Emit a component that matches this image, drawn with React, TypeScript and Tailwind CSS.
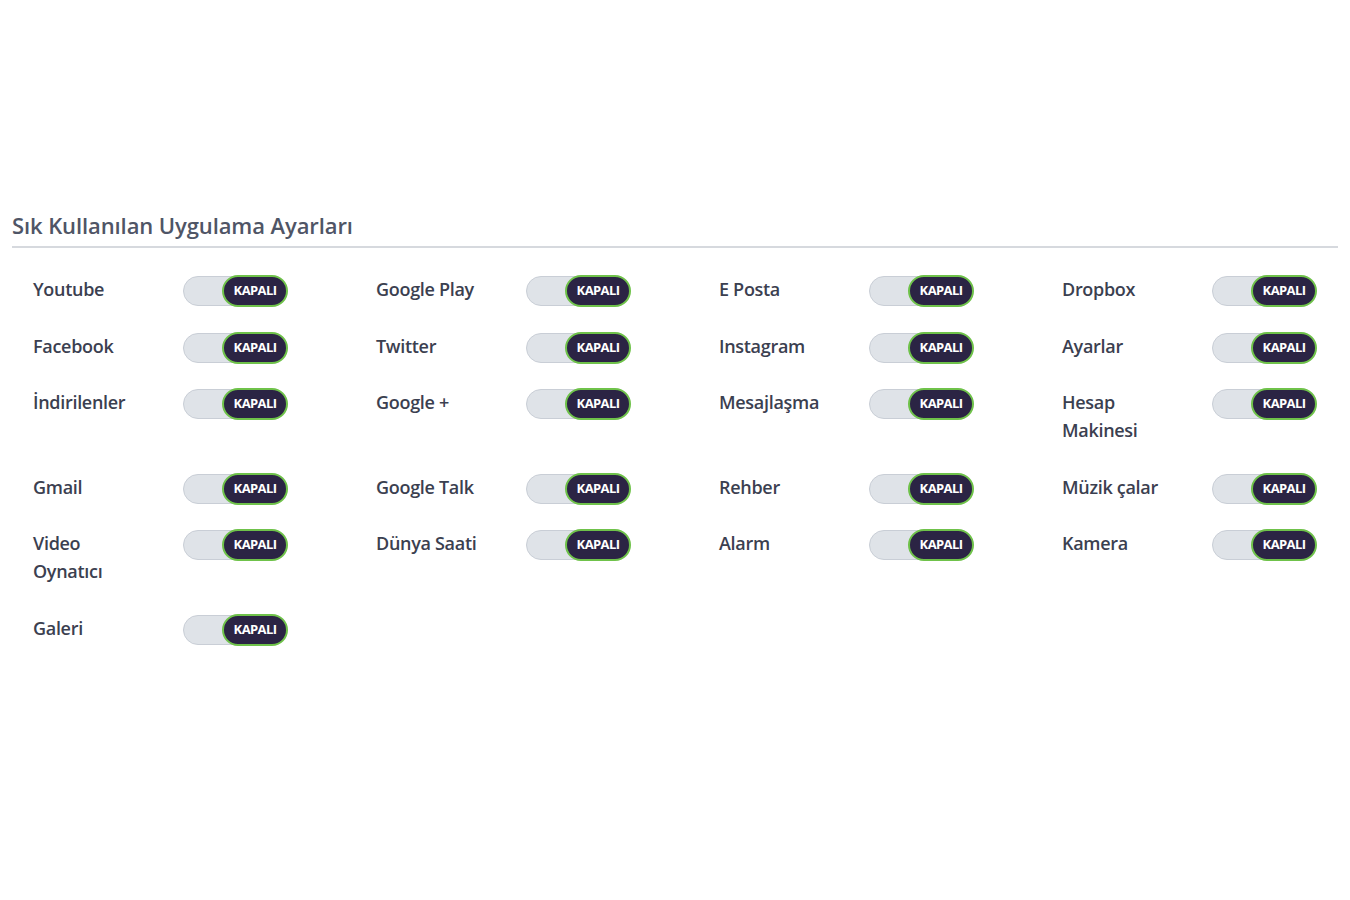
import React from "react";

const apps = [
  "Youtube",
  "Google Play",
  "E Posta",
  "Dropbox",
  "Facebook",
  "Twitter",
  "Instagram",
  "Ayarlar",
  "İndirilenler",
  "Google +",
  "Mesajlaşma",
  "Hesap Makinesi",
  "Gmail",
  "Google Talk",
  "Rehber",
  "Müzik çalar",
  "Video Oynatıcı",
  "Dünya Saati",
  "Alarm",
  "Kamera",
  "Galeri",
];

function Toggle() {
  return (
    <div className="relative h-[32px] w-[105px]">
      <div className="absolute left-0 top-[1px] h-[30px] w-[103px] rounded-full border border-[#c9ced6] bg-[#dfe3e8]" />
      <div className="absolute right-0 top-0 flex h-[32px] w-[66px] items-center justify-center rounded-full border-2 border-[#6fc24a] bg-[#2b2444] text-[13px] font-bold tracking-[-0.6px] text-white">
        KAPALI
      </div>
    </div>
  );
}

export default function App() {
  return (
    <div
      className="min-h-[900px] bg-white pt-[211px]"
      style={{ fontFamily: '"Open Sans", "Noto Sans", sans-serif' }}
    >
      <div className="mx-[12px]">
        <h2 className="border-b-2 border-[#d6d9de] pb-[7px] text-[22px] leading-[28px] font-semibold tracking-[-0.1px] text-[#4f5566]">
          Sık Kullanılan Uygulama Ayarları
        </h2>
      </div>
      <div className="grid grid-cols-[repeat(4,343px)] gap-y-[23.5px] pl-[33px] pt-[27px]">
        {apps.map((a) => (
          <div key={a} className="flex items-start">
            <div className="w-[150px] pr-[43px] pb-[5px] text-[18px] leading-[28px] font-semibold tracking-[-0.3px] text-[#3b4050]">
              {a}
            </div>
            <Toggle />
          </div>
        ))}
      </div>
    </div>
  );
}
